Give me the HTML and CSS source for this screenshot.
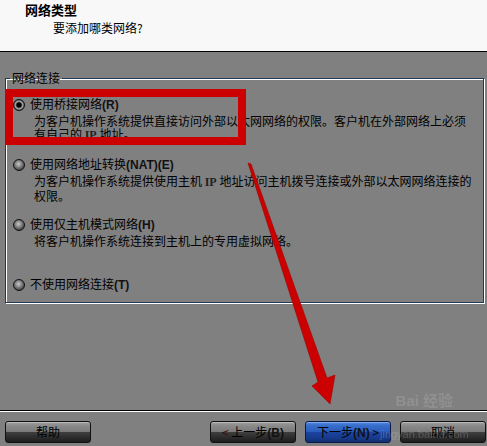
FILE: index.html
```html
<!DOCTYPE html>
<html lang="zh-CN">

<head>
    <meta charset="UTF-8">
    <meta name="viewport" content="width=device-width, initial-scale=1.0">
    <title>新建虚拟机向导</title>
    <link rel="stylesheet" href="styles.css">
</head>

<body>
    <div class="wizard">
        <!-- 顶部标题 -->
        <div class="header">
            <div class="title">网络类型</div>
            <div class="subtitle">要添加哪类网络?</div>
        </div>

        <!-- 网络连接选项 -->
        <div class="main">
            <fieldset class="group">
                <legend>网络连接</legend>

                <div class="option">
                    <div class="option-label"><span class="radio checked"></span><span>使用桥接网络<b class="key">(R)</b></span></div>
                    <div class="option-desc">
                        <div>为客户机操作系统提供直接访问外部以太网网络的权限。客户机在外部网络上必须</div>
                        <div>有自己的 <b class="ip">IP</b> 地址。</div>
                    </div>
                </div>

                <div class="option">
                    <div class="option-label"><span class="radio"></span><span>使用网络地址转换<b class="key">(NAT)(E)</b></span></div>
                    <div class="option-desc">
                        <div>为客户机操作系统提供使用主机 <b class="ip">IP</b> 地址访问主机拨号连接或外部以太网网络连接的</div>
                        <div>权限。</div>
                    </div>
                </div>

                <div class="option">
                    <div class="option-label"><span class="radio"></span><span>使用仅主机模式网络<b class="key">(H)</b></span></div>
                    <div class="option-desc">
                        <div>将客户机操作系统连接到主机上的专用虚拟网络。</div>
                    </div>
                </div>

                <div class="option">
                    <div class="option-label"><span class="radio"></span><span>不使用网络连接<b class="key">(T)</b></span></div>
                </div>
            </fieldset>
        </div>

        <!-- 底部按钮 -->
        <div class="footer">
            <button class="btn">帮助</button>
            <button class="btn btn-back"><span class="lt">&lt;</span> 上一步<b class="key">(B)</b></button>
            <button class="btn btn-next">下一步<b class="key">(N)</b> &gt;</button>
            <button class="btn">取消</button>
        </div>

        <!-- 标注：红框和箭头 -->
        <div class="mark"></div>
        <svg class="arrow" width="487" height="446" viewBox="0 0 487 446">
            <polygon points="248,163 251,164 327,378 335,375 330,404 312,386 318,382" fill="#cc0000" stroke="#a00000" stroke-width="0.6" />
        </svg>

        <div class="watermark">
            <span class="wm-logo">Bai 经验</span>
            <span class="wm-url">jingyan.baidu.com</span>
        </div>
    </div>
</body>

</html>
```

FILE: styles.css
```css
/* 通用 */
body {
    margin: 0;
    padding: 0;
    font-family: "Noto Sans CJK SC", "Liberation Sans", sans-serif;
    font-size: 12px;
    color: #000;
    background-color: #808080;
}

.wizard {
    position: relative;
    width: 487px;
    height: 446px;
    display: flex;
    flex-direction: column;
    overflow: hidden;
}

/* 标题栏 */
.header {
    height: 52px;
    box-sizing: border-box;
    padding: 2px 0 0 25px;
    background-color: #f8f8f8;
    border-bottom: 1px solid #000;
}

.title {
    font-size: 13px;
    font-weight: bold;
    line-height: 16px;
}

.subtitle {
    margin: 3px 0 0 28px;
    line-height: 14px;
}

/* 主区域 */
.main {
    flex: 1;
    padding-top: 19px;
}

.group {
    margin: 0 3px 0 5px;
    min-width: 0;
    padding: 12px 7px 10px 7px;
    border: 1px solid #1f3a55;
    box-shadow: 1px 1px 0 #fff, inset 1px 1px 0 #fff;
}

.group legend {
    margin-left: -3px;
    padding: 0 2px;
    line-height: 14px;
}

.option {
    height: 60px;
}

.option:last-child {
    height: auto;
}

.option-label {
    display: flex;
    align-items: center;
    gap: 5px;
    line-height: 14px;
    white-space: nowrap;
}

.option-desc {
    margin: 2px 0 0 21px;
    line-height: 13px;
    white-space: nowrap;
}

.key {
    font-family: "Liberation Sans", sans-serif;
    font-weight: bold;
    color: #111;
}

.ip {
    font-family: "Liberation Serif", serif;
    font-weight: bold;
    color: #222;
}

/* 单选按钮 */
.radio {
    width: 12px;
    height: 12px;
    box-sizing: border-box;
    flex: none;
    border-radius: 50%;
    border: 1px solid #111;
    background: radial-gradient(circle at 45% 40%, #c8c8c8 0, #8a8a8a 35%, #444 75%, #222 100%);
}

.radio.checked {
    background: radial-gradient(circle, #000 0, #000 2.2px, #6a6a6a 3px, #a8a8a8 3.8px, #555 5px, #222 6px);
}

/* 底部按钮栏 */
.footer {
    height: 36px;
    box-sizing: border-box;
    display: flex;
    gap: 9px;
    padding: 10px 1px 0 5px;
    border-top: 1px solid #000;
    box-shadow: inset 0 1px 0 #fff;
}

.btn {
    width: 86px;
    height: 22px;
    padding: 0;
    font-family: inherit;
    font-size: 12px;
    line-height: 20px;
    color: #000;
    border: 1px solid #111;
    border-radius: 3px;
    background: linear-gradient(to bottom, #a4a4a4 0, #8c8c8c 15%, #7a7a7a 48%, #3e3e3e 52%, #2a2a2a 80%, #1c1c1c 100%);
    box-shadow: inset 0 1px 0 #b8b8b8;
}

.btn:first-child {
    margin-right: auto;
}

.btn-back .lt {
    color: #3a0808;
}

.btn-next {
    border-color: #08184a;
    background: linear-gradient(to bottom, #5c8ee0 0, #3a6fcc 15%, #2a5cbc 48%, #1a44a0 52%, #163a8c 80%, #10306e 100%);
    box-shadow: inset 0 1px 0 #7aa6ea;
}

/* 红色标注 */
.mark {
    position: absolute;
    left: 5px;
    top: 89px;
    width: 241px;
    height: 56px;
    box-sizing: border-box;
    border: 8px solid #cc0000;
}

.arrow {
    position: absolute;
    left: 0;
    top: 0;
    pointer-events: none;
}

/* 水印 */
.watermark {
    position: absolute;
    left: 380px;
    top: 392px;
    display: flex;
    flex-direction: column;
    align-items: center;
    opacity: 0.22;
    pointer-events: none;
}

.wm-logo {
    font-family: "Liberation Sans", "Noto Sans CJK SC", sans-serif;
    font-size: 15px;
    font-weight: bold;
    color: #ccc;
    line-height: 18px;
    filter: blur(0.6px);
}

.wm-url {
    font-family: "Liberation Sans", sans-serif;
    font-size: 11px;
    color: #ddd;
    line-height: 14px;
    margin-top: 17px;
}
```
